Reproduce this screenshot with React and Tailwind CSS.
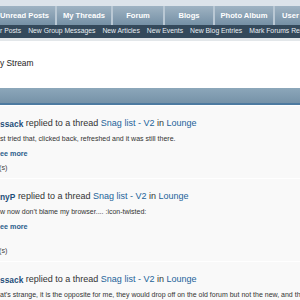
const tabs = [
  { label: 'Unread Posts', w: 'w-[55px] justify-end pr-[6px]' },
  { label: 'My Threads', w: 'w-[56px] justify-center' },
  { label: 'Forum', w: 'w-[52px] justify-center' },
  { label: 'Blogs', w: 'w-[50px] justify-center' },
  { label: 'Photo Album', w: 'w-[60px] justify-center' },
  { label: 'User', w: 'w-[40px] justify-start pl-[7px]' },
];

const subLinks = ['r Posts', 'New Group Messages', 'New Articles', 'New Events', 'New Blog Entries', 'Mark Forums Read'];

const items = [
  { who: 'ssack', text: 'st tried that, clicked back, refreshed and it was still there.', more: true, gap: false },
  { who: 'nyP', text: 'w now don\u2019t blame my browser.... :icon-twisted:', more: true, gap: true },
  { who: 'ssack', text: 'at\u2019s strange, it is the opposite for me, they would drop off on the old forum but not the new, and then', more: false, gap: false },
];

const Item = ({ item }) => (
  <div className="border-t border-white bg-[#f9f9f9] pt-[10px] pb-[3px]">
    <div className="h-[16px] flex items-center whitespace-nowrap text-[9px] text-[#333]">
      <span className="font-bold text-[8.4px] text-[#1f4f7a]">{item.who}</span>
      <span>&nbsp;replied to a thread&nbsp;</span>
      <span className="text-[#23639a]">Snag list - V2</span>
      <span>&nbsp;in&nbsp;</span>
      <span className="text-[#23639a]">Lounge</span>
    </div>
    <div className="h-[15px] flex items-center whitespace-nowrap text-[7px] text-[#333]">{item.text}</div>
    {item.more && (
      <div className="h-[14px] flex items-center text-[7.2px] font-bold text-[#2a5f8c]">ee more</div>
    )}
    {item.gap && <div className="h-[10px]" />}
    {item.more && (
      <div className="h-[14px] flex items-center text-[7.2px] text-[#444] -ml-[1px]">(s)</div>
    )}
  </div>
);

export default function App() {
  return (
    <div className="w-[300px] h-[300px] overflow-hidden bg-white" style={{ fontFamily: '"Liberation Sans", Arial, sans-serif' }}>
      <div className="h-[6px] bg-[#dce3ea]" />
      <div className="h-[19px] flex bg-gradient-to-b from-[#9fb3c3] to-[#7590a5] whitespace-nowrap">
        {tabs.map((t, i) => (
          <div
            key={t.label}
            className={`${t.w} shrink-0 flex items-center text-[7.6px] font-bold text-white ${i > 0 ? 'border-l-2 border-[#b9c8d4]' : ''}`}
          >
            {t.label}
          </div>
        ))}
      </div>
      <div className="h-[13px] flex items-center gap-[7px] bg-[#34495b] text-[6.8px] text-[#e8eef3] whitespace-nowrap overflow-hidden">
        {subLinks.map(s => <span key={s} className="shrink-0">{s}</span>)}
      </div>
      <div className="h-[3px] bg-[#e3e7ea]" />
      <div className="h-[47px] pt-[16px] text-[8.4px] text-[#222]">y Stream</div>
      <div className="h-[17px] bg-gradient-to-b from-[#8ca7ba] to-[#7692a8] border-b-2 border-[#4d7aa0]" />
      {items.map((it, i) => <Item key={i} item={it} />)}
    </div>
  );
}
